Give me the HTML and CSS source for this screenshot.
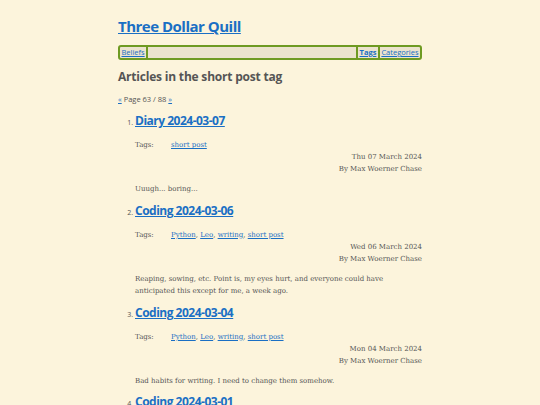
FILE: index.html
```html
<!DOCTYPE html>
<html>
<head>
<meta charset="utf-8">
<link rel="stylesheet" href="styles.css">
</head>
<body>
<div class="page">
  <header class="site-head">
    <h1 class="site-title"><a href="#">Three Dollar Quill</a></h1>
    <nav class="nav">
      <a class="nav-item nav-left" href="#">Beliefs</a>
      <span class="nav-fill"></span>
      <a class="nav-item nav-current" href="#">Tags</a>
      <a class="nav-item nav-last" href="#">Categories</a>
    </nav>
  </header>
  <main>
    <h2 class="tag-heading">Articles in the short post tag</h2>
    <p class="pager"><a href="#">«</a> Page 63 / 88 <a href="#">»</a></p>
    <ol class="articles">
      <li class="article">
        <h3 class="article-title"><a href="#">Diary 2024-03-07</a></h3>
        <div class="tags"><span class="tags-label">Tags:</span><span><a href="#">short post</a></span></div>
        <div class="meta">Thu 07 March 2024<br>By Max Woerner Chase</div>
        <p class="summary">Uuugh... boring...</p>
      </li>
      <li class="article">
        <h3 class="article-title"><a href="#">Coding 2024-03-06</a></h3>
        <div class="tags"><span class="tags-label">Tags:</span><span><a href="#">Python</a>, <a href="#">Leo</a>, <a href="#">writing</a>, <a href="#">short post</a></span></div>
        <div class="meta">Wed 06 March 2024<br>By Max Woerner Chase</div>
        <p class="summary">Reaping, sowing, etc. Point is, my eyes hurt, and everyone could have anticipated this except for me, a week ago.</p>
      </li>
      <li class="article">
        <h3 class="article-title"><a href="#">Coding 2024-03-04</a></h3>
        <div class="tags"><span class="tags-label">Tags:</span><span><a href="#">Python</a>, <a href="#">Leo</a>, <a href="#">writing</a>, <a href="#">short post</a></span></div>
        <div class="meta">Mon 04 March 2024<br>By Max Woerner Chase</div>
        <p class="summary">Bad habits for writing. I need to change them somehow.</p>
      </li>
      <li class="article">
        <h3 class="article-title"><a href="#">Coding 2024-03-01</a></h3>
        <div class="tags"><span class="tags-label">Tags:</span><span><a href="#">Python</a>, <a href="#">Leo</a>, <a href="#">writing</a>, <a href="#">short post</a></span></div>
        <div class="meta">Fri 01 March 2024<br>By Max Woerner Chase</div>
        <p class="summary">More writing.</p>
      </li>
    </ol>
  </main>
</div>
</body>
</html>
```
FILE: styles.css
```css
html, body {
  margin: 0;
  padding: 0;
  background: #fcf4dc;
}
body {
  font-family: "DejaVu Serif", "Liberation Serif", serif;
  color: #555555;
  font-size: 7px;
}
a { color: #1a6fc4; }
.page {
  width: 304px;
  margin: 0 auto;
  padding-top: 15px;
}
.site-title {
  margin: 0;
  font-family: "Open Sans", "Noto Sans", sans-serif;
  font-weight: 700;
  font-size: 15px;
  line-height: 22px;
  letter-spacing: -0.5px;
}
.site-title a { color: #1a6fc4; }
.nav {
  margin-top: 8px;
  display: flex;
  align-items: stretch;
  border: 2px solid #6e9a22;
  border-radius: 3px;
  background: #ebe3cd;
  height: 11px;
  font-family: "Open Sans", "Noto Sans", sans-serif;
  font-size: 7.5px;
  line-height: 11px;
}
.nav-item {
  padding: 0 1.5px;
  color: #1a6fc4;
}
.nav-left { border-right: 2px solid #6e9a22; }
.nav-fill { flex: 1; }
.nav-current {
  font-weight: 700;
  border-left: 2px solid #6e9a22;
  border-right: 2px solid #6e9a22;
}
.tag-heading {
  margin: 8px 0 0;
  font-family: "Open Sans", "Noto Sans", sans-serif;
  font-weight: 700;
  font-size: 12px;
  line-height: 18px;
  color: #555555;
  letter-spacing: -0.2px;
}
.pager {
  margin: 8px 0 0;
  font-family: "Open Sans", "Noto Sans", sans-serif;
  font-size: 7.5px;
  line-height: 10px;
}
.articles {
  margin: 9px 0 0;
  padding-left: 17px;
}
.article {
  font-family: "Open Sans", "Noto Sans", sans-serif;
  font-size: 7px;
}
.article-title {
  margin: 0;
  font-family: "Open Sans", "Noto Sans", sans-serif;
  font-weight: 700;
  font-size: 12px;
  line-height: 16px;
  letter-spacing: -0.5px;
}
.tags {
  margin-top: 11px;
  display: flex;
  font-family: "DejaVu Serif", serif;
  font-size: 7px;
  line-height: 10px;
}
.tags-label { width: 36px; }
.meta {
  margin-top: 1px;
  text-align: right;
  font-family: "DejaVu Serif", serif;
  font-size: 7px;
  line-height: 12px;
}
.summary {
  margin: 8px 0 0;
  font-family: "DejaVu Serif", serif;
  font-size: 7px;
  line-height: 12.5px;
  padding-bottom: 7px;
}
```
